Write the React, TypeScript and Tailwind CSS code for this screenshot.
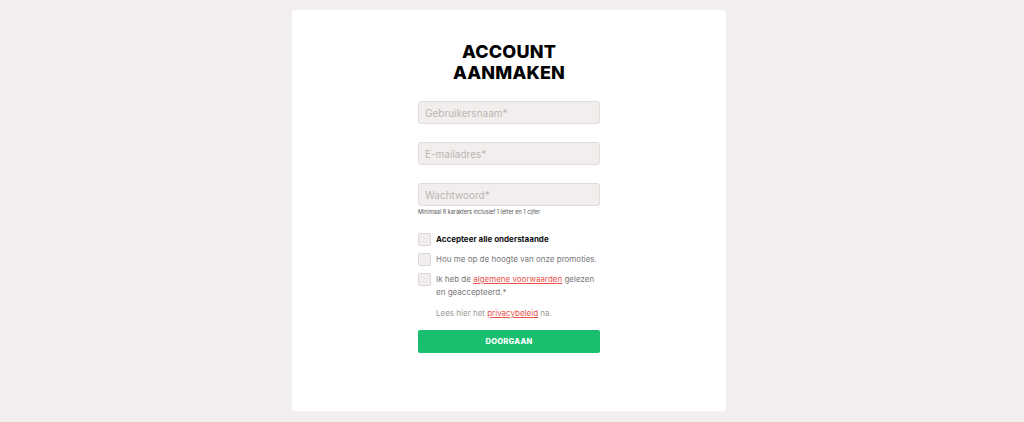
import React from "react";

function Field({ placeholder }: { placeholder: string }) {
  return (
    <input
      placeholder={placeholder}
      className="block w-full h-[23px] px-[6px] rounded-[3px] border border-[#e2dbda] bg-[#f2eeed] text-[10px] text-[#555] placeholder:text-[#bdb5b4] outline-none"
    />
  );
}

function Box() {
  return <span className="block shrink-0 w-[13px] h-[13px] rounded-[2px] border border-[#ddd6d5] bg-[#f2eeed]" />;
}

export default function App() {
  return (
    <main className="min-h-[422px] w-full bg-[#f2eeed] pt-[10px] pr-[6px] flex justify-center font-['Inter','Liberation_Sans',sans-serif]">
      <section className="w-[434px] h-[401px] bg-white rounded-[3px] pt-[31px]">
        <div className="mx-auto w-[182px]">
          <h1 className="text-center text-[18px] leading-[21px] font-extrabold tracking-[0.2px] text-black">
            ACCOUNT
            <br />
            AANMAKEN
          </h1>

          <div className="mt-[18px] flex flex-col gap-[18px]">
            <Field placeholder="Gebruikersnaam*" />
            <Field placeholder="E-mailadres*" />
            <div>
              <Field placeholder="Wachtwoord*" />
              <p className="mt-[2px] text-[5.5px] leading-[8px] text-[#555]">
                Minimaal 8 karakters inclusief 1 letter en 1 cijfer
              </p>
            </div>
          </div>

          <div className="mt-[17px] flex flex-col gap-[7px] text-[8px] leading-[13px]">
            <label className="flex items-start gap-[5px]">
              <Box />
              <span className="font-bold text-[#111]">Accepteer alle onderstaande</span>
            </label>
            <label className="flex items-start gap-[5px]">
              <Box />
              <span className="text-[#777]">Hou me op de hoogte van onze promoties.</span>
            </label>
            <label className="flex items-start gap-[5px]">
              <Box />
              <span className="text-[#777]">
                Ik heb de{" "}
                <a className="text-[#e8524a] underline">algemene voorwaarden</a> gelezen
                <br />
                en geaccepteerd.*
              </span>
            </label>
          </div>

          <p className="mt-[8px] pl-[18px] text-[8px] leading-[13px] text-[#999]">
            Lees hier het <a className="text-[#e8524a] underline">privacybeleid</a> na.
          </p>

          <button className="mt-[10px] w-full h-[23px] rounded-[2px] bg-[#19bf6e] text-white text-[7.5px] font-extrabold tracking-[0.3px]">
            DOORGAAN
          </button>
        </div>
      </section>
    </main>
  );
}
